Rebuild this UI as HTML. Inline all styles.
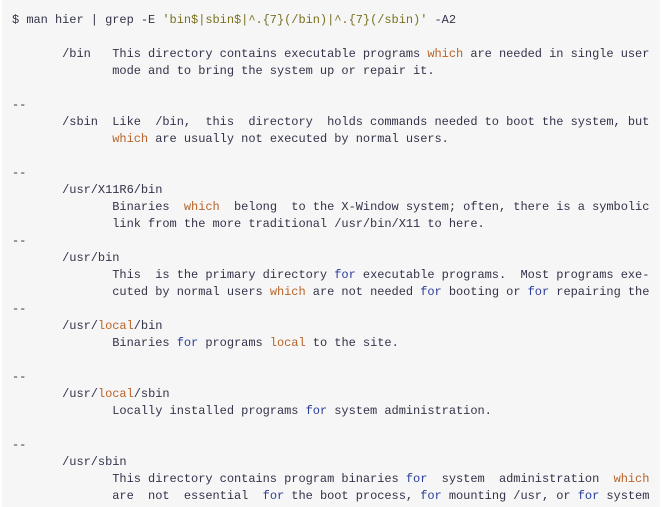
<!DOCTYPE html>
<html><head><meta charset="utf-8"><style>
html,body{margin:0;padding:0;background:#fff;width:668px;height:507px;overflow:hidden}
.box{position:absolute;left:2px;top:0;width:658px;height:507px;background:#f6f6f6}
pre{position:absolute;left:12px;top:12px;margin:0;font-family:"Liberation Mono",monospace;font-size:12px;letter-spacing:-0.04px;line-height:17px;color:#33334a}
.w{color:#b8652a}.f{color:#2a3d9a}.s{color:#7a7020}
</style></head><body><div class="box"></div>
<pre>$ man hier | grep -E <span class="s">'bin$|sbin$|^.{7}(/bin)|^.{7}(/sbin)'</span> -A2

       /bin   This directory contains executable programs <span class="w">which</span> are needed in single user
              mode and to bring the system up or repair it.

--
       /sbin  Like  /bin,  this  directory  holds commands needed to boot the system, but
              <span class="w">which</span> are usually not executed by normal users.

--
       /usr/X11R6/bin
              Binaries  <span class="w">which</span>  belong  to the X-Window system; often, there is a symbolic
              link from the more traditional /usr/bin/X11 to here.
--
       /usr/bin
              This  is the primary directory <span class="f">for</span> executable programs.  Most programs exe-
              cuted by normal users <span class="w">which</span> are not needed <span class="f">for</span> booting or <span class="f">for</span> repairing the
--
       /usr/<span class="w">local</span>/bin
              Binaries <span class="f">for</span> programs <span class="w">local</span> to the site.

--
       /usr/<span class="w">local</span>/sbin
              Locally installed programs <span class="f">for</span> system administration.

--
       /usr/sbin
              This directory contains program binaries <span class="f">for</span>  system  administration  <span class="w">which</span>
              are  not  essential  <span class="f">for</span> the boot process, <span class="f">for</span> mounting /usr, or <span class="f">for</span> system</pre>
</body></html>
